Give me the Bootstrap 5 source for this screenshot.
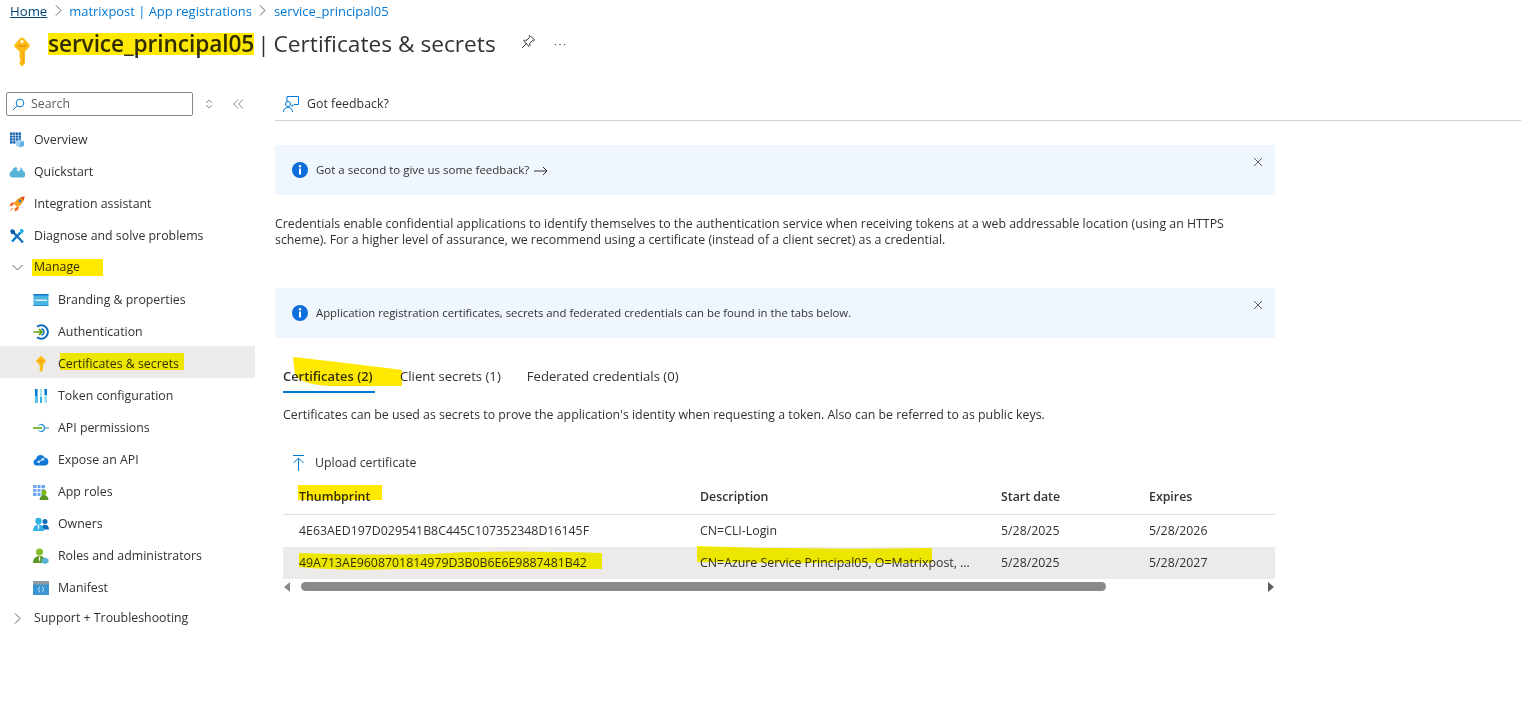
<!doctype html>
<html lang="en"><head><meta charset="utf-8"><title>Certificates &amp; secrets</title>
<link href="https://cdn.jsdelivr.net/npm/bootstrap@5.3.0/dist/css/bootstrap.min.css" rel="stylesheet">
<style>
html,body{height:100%;overflow:hidden}
body{font-family:"Open Sans","Liberation Sans",sans-serif;font-size:12.35px;color:#323130;background:#fff;position:relative;line-height:16px}
.crumbs{height:21px;padding:0 0 0 10px;gap:7.5px;color:#0078d4;align-items:center}
.crumbs a{color:#0078d4;text-decoration:none;font-size:12.95px}
.crumbs a.home{color:#004578;text-decoration:underline;font-size:13.2px}
.crumbs svg{width:7px;height:11px}
.titlebar{height:71px;padding:5px 0 0 14px;align-items:flex-start}
.titlekey{margin-top:11px}
.titlebar h1{font-size:22.7px;line-height:36px;font-weight:400;margin:0 0 0 18px;white-space:nowrap;color:#323130}
.titlebar h1 b{font-weight:600;margin-right:-3px;letter-spacing:-.1px}
.titlebar h1 i{font-style:normal;letter-spacing:-2px}
.tool-pin{margin:8px 0 0 25px}
.tool-more{margin:17px 0 0 18px}
.side{width:255px;flex:none}
.searchrow{height:24px;padding-left:6px;margin:0 0 8px;align-items:center}
.searchbox{width:187px;height:24px;border:1px solid #8a8886;border-radius:2px;padding-left:5px;gap:6px;color:#605e5c;align-items:center}
.side-ctl1{margin-left:12px}.side-ctl2{margin-left:20px}
.navrow{height:32px;padding-left:9px;gap:9px;align-items:center;color:#323130;white-space:nowrap}
.navrow svg{width:16px;height:16px;flex:none}
.navrow.group{padding-left:12px;gap:11px;height:30px}
.navrow.group svg{width:11px;height:11px}
.navrow.closed{margin-top:1px}
.navrow.sub{padding:4px 0 0 33px}
.navrow.on{background:#edebe9}
.main{flex:1;min-width:0;padding-left:20px}
.toolbar{height:33px;border-bottom:1px solid #d2d0ce;padding-left:8px;gap:8px;align-items:center;margin-bottom:24px;margin-top:-4px}
.inner{width:1000px}
.banner{height:50px;background:#eff6fe;padding-left:17px;gap:8px;align-items:center;position:relative;font-size:11.35px}
.banner .close-x{position:absolute;right:12px;top:12px;width:10px;height:10px}
.askline{font-size:11.5px}
.askline svg{margin-left:2px}
.para{margin:21px 0 40px;line-height:16px}
.tabbar{margin:23px 0 0 8px;gap:26px;height:32px;font-size:13.15px}
.tabitem{padding-top:7px;height:32px;white-space:nowrap}
.tabitem.on{border-bottom:2px solid #0078d4;font-weight:600;width:92px;font-size:12.9px;margin-right:-1px}
.tabdesc{margin:14px 0 0 8px}
.upload{margin:23px 0 0 8px;gap:10px;height:34px;padding-left:9px;align-items:center}
.gridwrap{margin-left:8px}
.certs{table-layout:fixed;width:992px;margin:0;font-size:12.35px;color:#323130;--bs-table-bg:transparent}
.certs th{font-weight:600;height:34px;padding:0 0 0 16px;border-bottom:1px solid #e1dfdd;line-height:16px;vertical-align:middle}
.certs td{height:32px;padding:0 0 0 16px;border:0;white-space:nowrap;line-height:16px;vertical-align:middle}
.certs tbody tr:first-child td{height:33px;padding-top:1px}
.certs tr.on td{background:#edebe9}
.c1{width:401px}.c2{width:301px}.c3{width:148px}.c4{width:142px}
.scroller{height:15px;align-items:center;background:#fff}
.thumb{width:805px;height:9px;background:#8a8a8a;border-radius:5px;margin:0 0 0 10px}
.sbar-sp{flex:1}
.marks{position:absolute;left:0;top:0;width:1521px;height:705px;mix-blend-mode:multiply;pointer-events:none}
.lemon{fill:#fffa00}
</style></head>
<body>
<nav class="crumbs d-flex"><a class="home" href="#">Home</a><svg viewBox="0 0 7 11"><path d="M1 .5 6 5.500 1 10.500" fill="none" stroke="#605e5c"/></svg><a href="#">matrixpost | App registrations</a><svg viewBox="0 0 7 11"><path d="M1 .5 6 5.500 1 10.500" fill="none" stroke="#605e5c"/></svg><a href="#">service_principal05</a></nav>
<header class="titlebar d-flex">
<svg class="titlekey" width="16" height="30" viewBox="0 0 16 30"><path d="M8 .5c.6 0 1.100.2 1.500.6l5.700 6.200c.8.800.8 2 0 2.800L11 14.500V26l-3 3.500-2.500-2.500v-1.500l1.200-1.200-1.200-1.200 1.200-1.200-1.200-1.200V14.500L.8 10.100c-.8-.8-.8-2 0-2.800L6.500 1.100C6.900.7 7.400.5 8 .5z" fill="#fcbc14"/><circle cx="8" cy="4.500" r="1.500" fill="#fff"/><rect x="3.500" y="8" width="9" height="2" fill="#f39c12"/><path d="M8.500 15h1.500v10.500l-1.500 1.500z" fill="#f5a30e"/></svg>
<h1><b>service_principal05</b> <i>|</i> Certificates &amp; secrets</h1>
<svg class="tool-pin" width="15" height="15" viewBox="0 0 15 15"><path d="M9 1.500 13.500 6 12.700 6.800 11.500 6.500 8.800 9.200 8.800 11.500 8 12.300 2.700 7 3.500 6.200 5.800 6.200 8.500 3.500 8.200 2.300zM5.300 9.700 1 14" fill="none" stroke="#323130"/></svg>
<svg class="tool-more" width="12" height="3" viewBox="0 0 12 3"><g fill="#605e5c"><circle cx="1.500" cy="1.500" r=".8"/><circle cx="6" cy="1.500" r=".8"/><circle cx="10.500" cy="1.500" r=".8"/></g></svg>
</header>
<div class="d-flex">
<aside class="side">
<div class="searchrow d-flex"><div class="searchbox d-flex"><svg width="13" height="13" viewBox="0 0 13 13"><circle cx="8" cy="5" r="3.800" fill="none" stroke="#0078d4"/><path d="M5.200 7.800 1 12" stroke="#0078d4" fill="none"/></svg><span>Search</span></div>
<svg class="side-ctl1" width="8" height="10" viewBox="0 0 8 10"><path d="M1 4 4 1l3 3M1 6l3 3 3-3" fill="none" stroke="#8a8886"/></svg>
<svg class="side-ctl2" width="11" height="10" viewBox="0 0 11 10"><path d="M5 .5.500 5 5 9.500M10 .5 5.500 5 10 9.500" fill="none" stroke="#8a8886"/></svg></div>
<div class="navrow d-flex"><svg viewBox="0 0 16 16"><path d="M1 .5h11v11H1z" fill="#0b5cab"/><path d="M3.800.5v11M6.500.5v11M9.300.5v11M1 3.300h11M1 6h11M1 8.800h11" stroke="#fff" stroke-width=".6"/><path d="M11 7.500l4 1.700v4.600L11 15.500l-4-1.700V9.200z" fill="#9fd0ee"/><path d="M11 11v4.500l4-1.700V9.200z" fill="#5fb0e3"/></svg>Overview</div>
<div class="navrow d-flex"><svg viewBox="0 0 16 16"><path d="M3.500 13.500a3.300 3.300 0 0 1-.5-6.500C3.500 5 5 3.200 7 3l1.500 1-1 2.500H10L9 9l3-4.500h-1.500l.5-1c2 .5 3 2 3 3.500a3.300 3.300 0 0 1-.5 6.500z" fill="#59b4d9"/></svg>Quickstart</div>
<div class="navrow d-flex"><svg viewBox="0 0 16 16"><path d="M15.500.5C11 1 7 3 5 8l3 3c5-2 7-6 7.500-10.500z" fill="#f9a11b"/><path d="M5.500 6 2 7 .5 10.500l3.500-1zM10 10.500 9 14l-3.500 1.500.5-3.500z" fill="#f26a21"/><path d="M3.500 11.500 0 16l4.500-3.500z" fill="#ef8a1c"/><circle cx="11" cy="5" r="1.400" fill="#2b7cd3"/><path d="M15.500.5c-1.500.2-3 .5-4.200 1.200l3 3c.7-1.200 1-2.700 1.200-4.200z" fill="#e44c1a"/></svg>Integration assistant</div>
<div class="navrow d-flex"><svg viewBox="0 0 16 16"><path d="M3 13.500 13 3" stroke="#0078d4" stroke-width="2.400"/><path d="M11 1h2.500L15 3l-1.500 2.500-2.500-.5z" fill="#32b0e7"/><path d="M5 5l9 9.500" stroke="#1b6fb5" stroke-width="2.400"/><path d="M1 3 3 1l3 1.500L6 6 2.500 6z" fill="#0b5cab"/></svg>Diagnose and solve problems</div>
<div class="navrow group d-flex"><svg viewBox="0 0 11 11"><path d="M.5 3 5.500 8l5-5" fill="none" stroke="#605e5c"/></svg>Manage</div>
<div class="navrow sub d-flex"><svg viewBox="0 0 16 16"><path d="M.5 2h15v12H.5z" fill="#4ab5e3"/><path d="M.5 2h15v1.500H.5z" fill="#0f78c4"/><path d="M2 7.500h12v1.500H2z" fill="#d7f0fa"/><path d="M.5 13h15v1H.5z" fill="#1b93d2"/></svg>Branding &amp; properties</div>
<div class="navrow sub d-flex"><svg viewBox="0 0 16 16"><path d="M4 2.800a6.700 6.700 0 1 1 0 10.400" fill="none" stroke="#0f6cbd" stroke-width="2"/><path d="M8.500 4.800a3.300 3.300 0 0 1 0 6.400" fill="none" stroke="#0f6cbd" stroke-width="1.400"/><path d="M.5 8h8.500M6 5 9 8 6 11" fill="none" stroke="#57a300" stroke-width="1.700"/></svg>Authentication</div>
<div class="navrow sub on d-flex"><svg viewBox="0 0 16 16"><path d="M8 0c.4 0 .7.100 1 .4l3.500 3.800c.5.500.5 1.300 0 1.800L10 8.500v5.500l-2 2-1.500-1.500v-1l.8-.8-.8-.8.800-.8-.8-.8V8.500L3.500 6c-.5-.5-.5-1.300 0-1.800L7 .4C7.300.1 7.600 0 8 0z" fill="#fcbc14"/><rect x="5.500" y="4.500" width="5" height="1.200" fill="#f39c12"/></svg>Certificates &amp; secrets</div>
<div class="navrow sub d-flex"><svg viewBox="0 0 16 16"><path d="M2 1h2.500v14H2z" fill="#0078d4"/><path d="M2 8h2.500v7H2z" fill="#50c0ec"/><path d="M7 1h2v8H7z" fill="#a6e0f6"/><path d="M7 9h2v6H7z" fill="#32b0e7"/><path d="M11.500 1H14v6h-2.500z" fill="#0078d4"/><path d="M11.500 7H14v8h-2.500z" fill="#9cdcf5"/></svg>Token configuration</div>
<div class="navrow sub d-flex"><svg viewBox="0 0 16 16"><path d="M11.500 8H16" stroke="#2b88c9" stroke-width="1"/><path d="M8 4.500a3.500 3.500 0 1 1 0 7" fill="none" stroke="#2b9bd4" stroke-width="1.500"/><path d="M5.500 5.500a3.500 3.500 0 0 1 2.500-1M5.500 10.500a3.500 3.500 0 0 0 2.500 1" fill="none" stroke="#2b9bd4"/><path d="M0 8h9" stroke="#57a300" stroke-width="1.500"/></svg>API permissions</div>
<div class="navrow sub d-flex"><svg viewBox="0 0 16 16"><path d="M3.500 13.500a3.300 3.300 0 0 1-.3-6.500 4.500 4.500 0 0 1 8.600-1.200 3.900 3.900 0 0 1 .5 7.700z" fill="#0f78d4"/><circle cx="5.800" cy="9.800" r="1.400" fill="#d6ecfa"/><circle cx="9.800" cy="7.300" r="1.400" fill="#d6ecfa"/><path d="M5.800 9.800 9.800 7.300" stroke="#d6ecfa"/></svg>Expose an API</div>
<div class="navrow sub d-flex"><svg viewBox="0 0 16 16"><path d="M0 1h12v11H0z" fill="#6ba6ef"/><path d="M4 1v11M8 1v11M0 4.600h12M0 8.300h12" stroke="#fff"/><circle cx="11" cy="8.500" r="2.500" fill="#7fba00"/><path d="M6.500 16c0-3 2-5 4.500-5s4.500 2 4.500 5z" fill="#5e9624"/></svg>App roles</div>
<div class="navrow sub d-flex"><svg viewBox="0 0 16 16"><circle cx="12" cy="5.500" r="2.500" fill="#0f6cbd"/><path d="M8 13.500c0-3 1.500-4.800 4-4.800s4 1.800 4 4.800z" fill="#0f6cbd"/><circle cx="5.500" cy="5" r="3.200" fill="#32b0e7"/><path d="M0 15c0-4 2.500-6.500 5.500-6.500S11 11 11 15z" fill="#32b0e7"/><path d="M5.500 8.500 4.700 10.500 5.500 14.500 6.300 10.500z" fill="#fff"/></svg>Owners</div>
<div class="navrow sub d-flex"><svg viewBox="0 0 16 16"><circle cx="6.500" cy="4" r="3.500" fill="#86bc25"/><path d="M0 15c0-5 3-7 6.500-7 3 0 4.500 1 4.500 3v4z" fill="#5e9624"/><path d="M6.500 8 5.700 10l.8 4.500.8-4.500z" fill="#fff"/><path d="M12 9.500l3.500 1.700v3.300L12 16l-3.500-1.500v-3.300z" fill="#59b4d9"/></svg>Roles and administrators</div>
<div class="navrow sub d-flex"><svg viewBox="0 0 16 16"><path d="M0 1h16v14H0z" fill="#3a96d2"/><path d="M0 1h16v3.500H0z" fill="#8f9aa3"/><path d="M7 7q-1 0-1 1.200t-.6 1.300q.6.100.6 1.300T7 12M9 7q1 0 1 1.200t.6 1.300q-.6.100-.6 1.300T9 12" fill="none" stroke="#fff" stroke-width=".7"/></svg>Manifest</div>
<div class="navrow group closed d-flex"><svg viewBox="0 0 11 11"><path d="M3 .5 8 5.500l-5 5" fill="none" stroke="#605e5c"/></svg>Support + Troubleshooting</div>
</aside>
<main class="main">
<div class="toolbar d-flex"><svg width="16" height="17" viewBox="0 0 16 17"><path d="M4 6V.5h11.500v8H11l-2 2V8.500" fill="none" stroke="#0078d4"/><circle cx="5" cy="8" r="2.500" fill="#fff" stroke="#0078d4"/><path d="M.5 16c0-3 2-4.500 4.500-4.500S9.500 13 9.500 16" fill="none" stroke="#0078d4"/></svg><span>Got feedback?</span></div>
<div class="inner">
<div class="banner d-flex"><svg width="16" height="16" viewBox="0 0 16 16"><circle cx="8" cy="8" r="8" fill="#0f6cdb"/><rect x="7" y="6.500" width="2" height="6" fill="#fff"/><circle cx="8" cy="4.300" r="1.200" fill="#fff"/></svg><span class="askline">Got a second to give us some feedback? <svg width="14" height="10" viewBox="0 0 14 10"><path d="M0 5h13M9 1l4 4-4 4" fill="none" stroke="#323130"/></svg></span><svg class="close-x" viewBox="0 0 10 10"><path d="M1 1l8 8M9 1 1 9" stroke="#605e5c"/></svg></div>
<p class="para">Credentials enable confidential applications to identify themselves to the authentication service when receiving tokens at a web addressable location (using an HTTPS scheme). For a higher level of assurance, we recommend using a certificate (instead of a client secret) as a credential.</p>
<div class="banner d-flex"><svg width="16" height="16" viewBox="0 0 16 16"><circle cx="8" cy="8" r="8" fill="#0f6cdb"/><rect x="7" y="6.500" width="2" height="6" fill="#fff"/><circle cx="8" cy="4.300" r="1.200" fill="#fff"/></svg><span>Application registration certificates, secrets and federated credentials can be found in the tabs below.</span><svg class="close-x" viewBox="0 0 10 10"><path d="M1 1l8 8M9 1 1 9" stroke="#605e5c"/></svg></div>
<div class="tabbar d-flex"><div class="tabitem on">Certificates (2)</div><div class="tabitem">Client secrets (1)</div><div class="tabitem">Federated credentials (0)</div></div>
<p class="tabdesc">Certificates can be used as secrets to prove the application's identity when requesting a token. Also can be referred to as public keys.</p>
<div class="upload d-flex"><svg width="13" height="16" viewBox="0 0 13 16"><path d="M1 .5h11M6.500 16V3.500M1.500 8l5-5 5 5" fill="none" stroke="#0078d4"/></svg><span>Upload certificate</span></div>
<div class="gridwrap">
<table class="table certs"><colgroup><col class="c1"><col class="c2"><col class="c3"><col class="c4"></colgroup>
<thead><tr><th>Thumbprint</th><th>Description</th><th>Start date</th><th>Expires</th></tr></thead>
<tbody><tr><td>4E63AED197D029541B8C445C107352348D16145F</td><td>CN=CLI-Login</td><td>5/28/2025</td><td>5/28/2026</td></tr>
<tr class="on"><td>49A713AE9608701814979D3B0B6E6E9887481B42</td><td>CN=Azure Service Principal05, O=Matrixpost, ...</td><td>5/28/2025</td><td>5/28/2027</td></tr></tbody></table>
<div class="scroller d-flex"><svg width="8" height="10" viewBox="0 0 8 10"><path d="M7 0v10L1 5z" fill="#8a8a8a"/></svg><div class="thumb"></div><div class="sbar-sp"></div><svg width="8" height="10" viewBox="0 0 8 10"><path d="M1 0v10l6-5z" fill="#605e5c"/></svg></div>
</div></div></main></div>
<svg class="marks" viewBox="0 0 1521 705"><g fill="#ffe900">
<path d="M48 33h206v22H48z"/><path d="M32 259h71v17H32z"/><path class="lemon" d="M60 353h124v17H60z"/>
<path d="M293 357 Q340 362 402 370V386H330Q300 384 295 375z"/>
<path d="M298 485h84v15h-84z"/>
<path class="lemon" d="M299 553Q400 556 450 553T602 553V569H400Q340 571 299 567z"/>
<path class="lemon" d="M697 546Q800 550 932 548V563H800L697 562z"/></g></svg>
</body></html>
